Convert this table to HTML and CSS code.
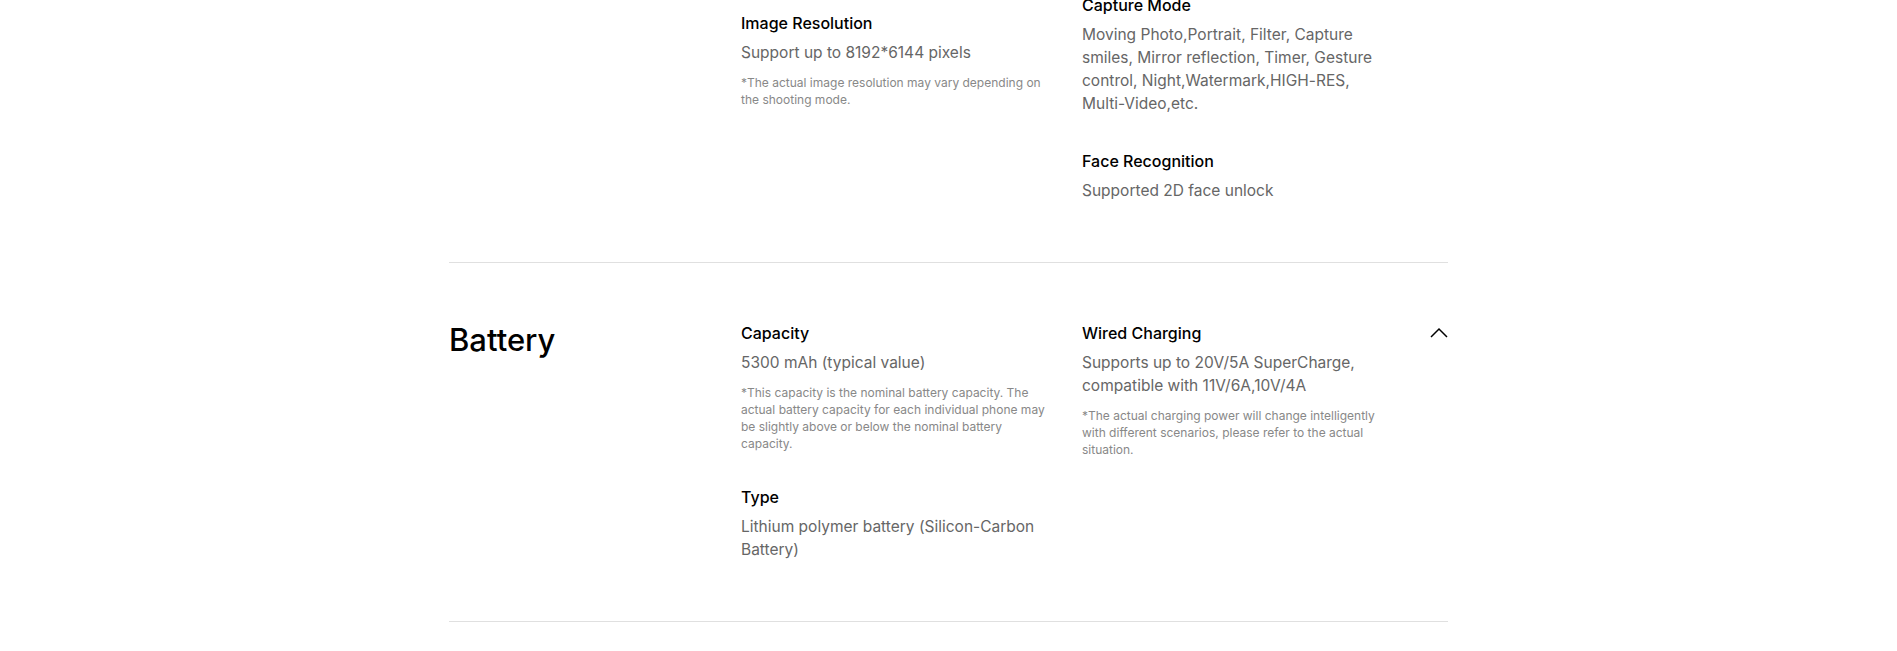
FILE: index.html
```html
<!DOCTYPE html>
<html lang="en">
<head>
<meta charset="utf-8">
<title>Specs</title>
<link rel="stylesheet" href="styles.css">
</head>
<body>
<main class="specs">
  <section class="spec-section spec-section--clipped">
    <h2 class="spec-heading"></h2>
    <div class="spec-cols">
      <div class="spec-col spec-col--offset">
        <div class="spec-item">
          <h3 class="spec-title">Image Resolution</h3>
          <p class="spec-value">Support up to 8192*6144 pixels</p>
          <p class="spec-note">*The actual image resolution may vary depending on the shooting mode.</p>
        </div>
      </div>
      <div class="spec-col">
        <div class="spec-item">
          <h3 class="spec-title">Capture Mode</h3>
          <p class="spec-value">Moving Photo,Portrait, Filter, Capture smiles, Mirror reflection, Timer, Gesture control, Night,Watermark,HIGH-RES, Multi-Video,etc.</p>
        </div>
        <div class="spec-item">
          <h3 class="spec-title">Face Recognition</h3>
          <p class="spec-value">Supported 2D face unlock</p>
        </div>
      </div>
      <div class="spec-toggle"></div>
    </div>
  </section>

  <section class="spec-section">
    <h2 class="spec-heading">Battery</h2>
    <div class="spec-cols">
      <div class="spec-col">
        <div class="spec-item">
          <h3 class="spec-title">Capacity</h3>
          <p class="spec-value">5300 mAh (typical value)</p>
          <p class="spec-note">*This capacity is the nominal battery capacity. The actual battery capacity for each individual phone may be slightly above or below the nominal battery capacity.</p>
        </div>
        <div class="spec-item">
          <h3 class="spec-title">Type</h3>
          <p class="spec-value">Lithium polymer battery (Silicon-Carbon Battery)</p>
        </div>
      </div>
      <div class="spec-col">
        <div class="spec-item">
          <h3 class="spec-title">Wired Charging</h3>
          <p class="spec-value">Supports up to 20V/5A SuperCharge, compatible with 11V/6A,10V/4A</p>
          <p class="spec-note">*The actual charging power will change intelligently with different scenarios, please refer to the actual situation.</p>
        </div>
      </div>
      <div class="spec-toggle">
        <svg class="chevron" width="18" height="11" viewBox="0 0 18 11" aria-hidden="true">
          <path d="M1 10 L9 2 L17 10" fill="none" stroke="#000" stroke-width="1.5"/>
        </svg>
      </div>
    </div>
  </section>
</main>
</body>
</html>
```

FILE: styles.css
```css
* { box-sizing: border-box; }
html, body { margin: 0; padding: 0; background: #fff; }
body {
  font-family: Inter, "Noto Sans", "Liberation Sans", sans-serif;
  font-feature-settings: "calt" 0;
  color: #000;
  overflow: hidden;
}
.specs {
  width: 999px;
  margin: 0 auto 0 449px;
}
.spec-section {
  display: flex;
  padding: 58px 0 60px;
  border-bottom: 1px solid #e0e0e0;
}
.spec-section--clipped {
  margin-top: -7px;
  padding-top: 0;
}
.spec-heading {
  width: 292px;
  flex: none;
  margin: 0;
  font-size: 31px;
  font-weight: 500;
  line-height: 38px;
  letter-spacing: 0;
}
.spec-cols {
  flex: 1;
  display: flex;
}
.spec-col {
  width: 310px;
  margin-right: 31px;
  flex: none;
}
.spec-col--offset { padding-top: 18px; }
.spec-toggle {
  flex: 1;
  display: flex;
  justify-content: flex-end;
  padding-top: 6px;
}
.chevron { display: block; }
.spec-item { margin-bottom: 33.5px; }
.spec-item:last-child { margin-bottom: 0; }
.spec-title {
  margin: 0 0 6px;
  font-size: 16px;
  font-weight: 500;
  line-height: 24px;
}
.spec-value {
  margin: 0;
  font-size: 15.5px;
  line-height: 23px;
  color: #666;
}
.spec-note {
  margin: 10px 0 0;
  font-size: 12px;
  line-height: 17px;
  color: #888;
}
```
